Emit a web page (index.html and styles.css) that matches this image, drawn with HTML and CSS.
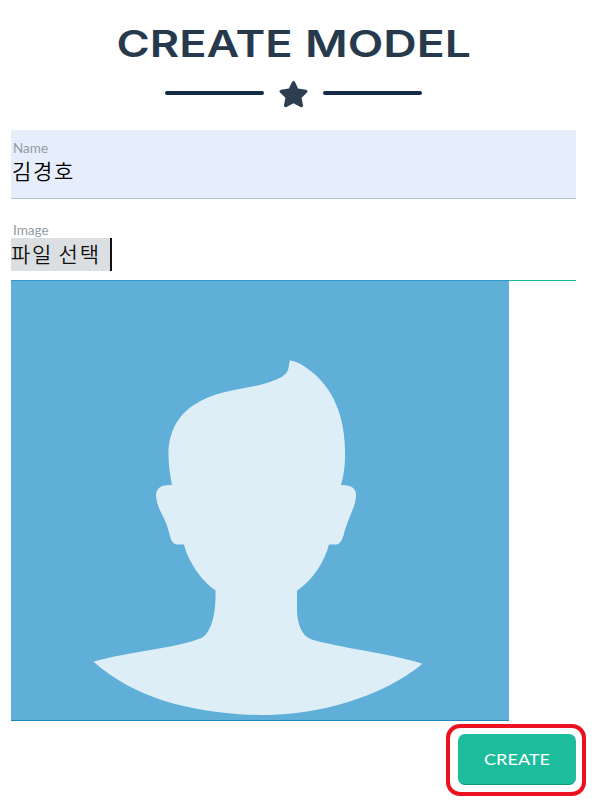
FILE: index.html
```html
<!DOCTYPE html>
<html lang="ko">
<head>
<meta charset="utf-8">
<title>Create Model</title>
<link rel="stylesheet" href="styles.css">
</head>
<body>
<main class="page">
  <h1 class="title">
    <svg width="600" height="65" viewBox="0 0 600 65">
      <text x="116.500" y="57" textLength="176" lengthAdjust="spacingAndGlyphs">CREATE</text>
      <text x="305" y="57" textLength="166" lengthAdjust="spacingAndGlyphs">MODEL</text>
    </svg>
  </h1>
  <div class="divider">
    <span class="rule"></span>
    <svg class="star" width="29" height="27" viewBox="0 0 29 27"><path d="M12.900 1.300Q14.500-1.100 16.100 1.300L19.100 7.600L27 8.700Q29.500 9.600 28 11.500L22.600 16.700L24 24.200Q24 26.800 21.500 26L14.500 22.300L7.600 26Q5 26.700 5 24.200L6.400 16.700L1 11.500Q-.5 9.600 2 8.700L9.900 7.600Z"/></svg>
    <span class="rule"></span>
  </div>
  <form class="form">
    <div class="field name-field">
      <label class="label">Name</label>
      <div class="value">김경호</div>
    </div>
    <div class="field image-field">
      <label class="label">Image</label>
      <div class="file">파일 선택</div>
    </div>
    <svg class="avatar" width="498" height="441" viewBox="11 280 498 440" preserveAspectRatio="none">
      <path d="M290 359.500Q299 361 309 369C335 388 346 420 345 456Q345 471 341 484.500C351 484 357 488 356 496C355 508 348 517 343.500 535Q341 543 337 544H329C324 562 314 578 297 590.500V610C297 623 302 636 311 639C341 648 385 652 422.500 663.500C383 696 322 715 259 715C190 713 135 698 93.500 661.500C129 651 174 649 202 637.500C212 631 216 613 215.500 590C202 581 188 561 184 544H176Q172 543 170 536C166 516 157 510 156 495C156 487 162 484 172 484.500Q168 465 168.500 449C171 420 187 404 215 394C238 387 265 386 282 376C290 371 288 366 290 359.500Z"/>
    </svg>
    <div class="actions">
      <div class="highlight">
        <button class="create" type="button">
          <svg width="118" height="51"><text x="26" y="31.300" textLength="66" lengthAdjust="spacingAndGlyphs">CREATE</text></svg>
        </button>
      </div>
    </div>
  </form>
</main>
</body>
</html>
```
FILE: styles.css
```css
* { box-sizing: border-box; }
body { margin: 0; background: #fff; font-family: Lato, "Noto Sans CJK KR", sans-serif; }
.page { width: 600px; height: 800px; overflow: hidden; }
.title { margin: 0; height: 65px; }
.title svg { display: block; }
.title text { font: 600 37px Inter, sans-serif; fill: #26394d; }
.divider { display: flex; align-items: center; gap: 15px; height: 27px; margin: 16px 0 22px 165px; }
.rule { width: 99px; height: 4px; margin-top: -3px; border-radius: 2px; background: #132b43; }
.star { fill: #2c3e50; }
.form { width: 565px; margin-left: 11px; }
.field { display: flex; flex-direction: column; }
.label { height: 18px; padding-left: 2px; font-size: 13.5px; line-height: 18px; color: #929ca6; }
.name-field { height: 69px; padding-top: 9px; background: #e6eefc; border-bottom: 1px solid #b9c3d0; }
.value { padding-left: 1px; font: 350 21px/27px "Noto Sans CJK KR", sans-serif; color: #000; letter-spacing: 1.7px; }
.image-field { height: 82px; padding-top: 22px; border-bottom: 1px solid #1abc9c; }
.image-field .label { height: 17px; }
.file { width: 101px; height: 33px; background: #dcdfe1; border-right: 2px solid #111; font: 350 21px/30px "Noto Sans CJK KR", sans-serif; letter-spacing: 1.7px; word-spacing: -2px; white-space: nowrap; color: #111; }
.avatar { display: block; margin-top: -1px; background: #5fafd9; border-top: 1px solid #2d9acb; border-bottom: 1px solid #2285bd; }
.avatar path { fill: #deeef6; }
.actions { display: flex; justify-content: flex-end; margin: 3px -10px 0 0; }
.highlight { width: 140px; height: 72px; padding: 6px 0 0 8px; border: 4px solid #ed1020; border-radius: 14px; }
.create { display: block; width: 118px; height: 51px; padding: 0; border: 0; border-bottom: 1px solid #119a7e; border-radius: 7px; background: #1dbc9c; }
.create svg { display: block; }
.create text { font: 16px Lato, sans-serif; fill: #fff; }
```
